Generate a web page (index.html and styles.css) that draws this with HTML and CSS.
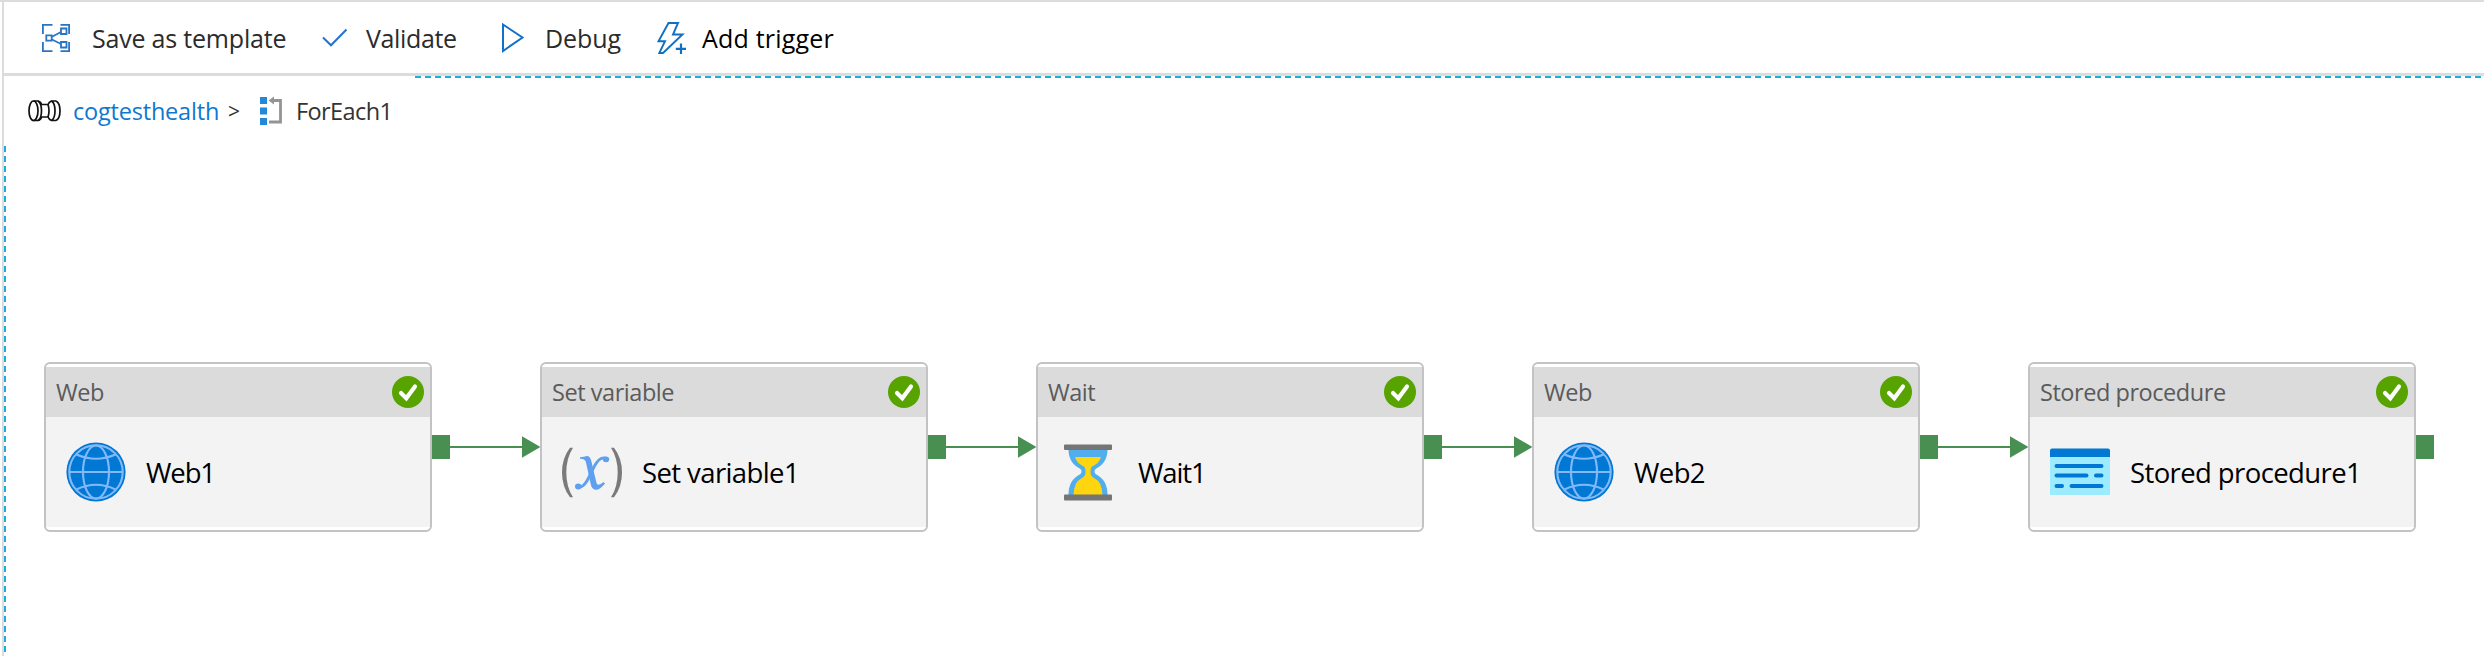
FILE: index.html
```html
<!DOCTYPE html>
<html lang="en">
<head>
<meta charset="utf-8">
<title>ForEach1</title>
<link rel="stylesheet" href="styles.css">
</head>
<body>
<svg class="defs" aria-hidden="true">
  <symbol id="ok" viewBox="0 0 32 32"><circle cx="16" cy="16" r="16" fill="#57a300"/><path d="M9 17 L14.3 22.2 L23 10.5" fill="none" stroke="#fff" stroke-width="4.2" stroke-linecap="round"/></symbol>
  <symbol id="globe" viewBox="0 0 60 60"><circle cx="30" cy="30" r="29.6" fill="#0078d4"/><g fill="none" stroke="#83b9f9" stroke-width="2.1"><circle cx="30" cy="30" r="26.7"/><ellipse cx="30" cy="30" rx="13" ry="26.5"/><path d="M3 30H57M10.500 12.500Q30 21 49.500 12.500M10.500 47.500Q30 38 49.500 47.500"/></g></symbol>
  <symbol id="arrow" viewBox="0 0 90 24"><path d="M0 12H73" stroke="#498f51" stroke-width="2"/><path d="M72 1.300 90.500 12 72 22.700Z" fill="#498f51"/></symbol>
</svg>
<div class="app">
  <header class="toolbar">
    <div class="tool save"><svg width="28" height="28" viewBox="0 0 28 28" fill="none" stroke="#2b74c4" stroke-width="1.800"><path d="M.9 10V.9H10.500M18.500.9H27.100V10M.9 18V27.100H10.500M18.500 27.100H27.100V18M10 12.800 19 8M10 15.500 19 20"/><path d="M4.300 11.300H9.700V16.700H4.300ZM19 4.500H24.500V10H19ZM19 18H24.500V23.500H19Z"/></svg><span class="t">Save as template</span></div>
    <div class="tool validate"><svg width="26" height="20" viewBox="0 0 26 20" fill="none" stroke="#2372d0" stroke-width="2"><path d="M1 9.500 9 17.300 24.500 1.500"/></svg><span class="t">Validate</span></div>
    <div class="tool debug"><svg width="24" height="32" viewBox="0 0 24 32" fill="none" stroke="#1170cc" stroke-width="2"><path d="M2 2.500V29L21.500 15.500Z"/></svg><span class="t">Debug</span></div>
    <div class="tool trigger"><svg width="30" height="34" viewBox="0 0 30 34" fill="none" stroke="#1170c0" stroke-width="1.900"><path d="M11.500 2H21L16 13.500H25.500L6 32H2.300L8 20.200H1.500Z"/><path d="M24 22.500V33M18.800 27.800H29" stroke-width="2.200"/></svg><span class="t">Add trigger</span></div>
  </header>
  <main class="canvas">
    <div class="edge-top"></div>
    <div class="edge-left"></div>
    <nav class="crumbs">
      <svg class="pipe" width="33" height="22" viewBox="0 0 33 22" fill="none" stroke="#111" stroke-width="1.700"><path d="M5.500 1H10Q13 2 13.500 4.500H20Q21 2 23.500 1H28M5.500 20.500H10Q13 19.500 13.500 17H20Q21 19.500 23.500 20.500H28"/><ellipse cx="5.500" cy="10.750" rx="4.500" ry="9.750"/><path d="M10 1Q13.500 3 13.500 10.750T10 20.500M23.500 1Q27 3 27 10.750T23.500 20.500M20 4.500Q22 10.700 20 17M28 1Q32 3 32 10.750T28 20.500"/></svg>
      <a class="t link-text">cogtesthealth</a><span class="sep">&gt;</span>
      <svg class="loop" width="23" height="30" viewBox="0 0 23 30"><path fill="#2388d8" d="M0 1H7V8H0ZM0 11.500H7V18.500H0ZM0 22H7V29H0Z"/><path d="M13 4.500H20.500V26H9" fill="none" stroke="#949494" stroke-width="2.800"/><path d="M8.500 4.500 14 .5V8.500Z" fill="#949494"/></svg>
      <span class="t current">ForEach1</span>
    </nav>
    <div class="flow">
      <section class="card"><div class="head"><span class="t">Web</span><svg class="ok"><use href="#ok"/></svg></div><div class="body"><svg class="icon"><use href="#globe"/></svg><span class="t short">Web1</span></div></section><i class="port"></i><svg class="link"><use href="#arrow"/></svg>
      <section class="card"><div class="head"><span class="t">Set variable</span><svg class="ok"><use href="#ok"/></svg></div><div class="body"><svg class="icon" viewBox="0 0 60 60"><g fill="#7a7a7a"><path d="M8 5.700H11Q4.300 16 4.300 30.500T11 55.300H8Q0 45 0 30.500T8 5.700Z"/><path d="M52 5.700H49Q55.700 16 55.700 30.500T49 55.300H52Q60 45 60 30.500T52 5.700Z"/></g><path fill="#5ea0ef" d="M18 15.200Q22 14.800 25 14Q28 14 29.300 19L34.500 41Q35.800 45 41.500 40L43 41.500Q38 48 33.500 47.800Q30 47.500 28.800 42.500L24 20.500Q23 16.500 18 16.800Z"/><path d="M43.500 16Q37.500 14.500 32.500 24L26.500 36Q21.500 46.500 15.500 45" fill="none" stroke="#5ea0ef" stroke-width="2.800"/><ellipse cx="44" cy="17.300" rx="3.200" ry="2.900" fill="#5ea0ef"/><ellipse cx="16.200" cy="44.500" rx="3.200" ry="2.900" fill="#5ea0ef"/></svg><span class="t">Set variable1</span></div></section><i class="port"></i><svg class="link"><use href="#arrow"/></svg>
      <section class="card"><div class="head"><span class="t">Wait</span><svg class="ok"><use href="#ok"/></svg></div><div class="body"><svg class="icon" viewBox="0 0 60 60"><path fill="#50adee" d="M10.500 6H49.500Q50 21 37.500 27Q35.500 29.500 37.500 32Q50 38 49.500 54H10.500Q10 38 22.500 32Q24.500 29.500 22.500 27Q10 21 10.500 6Z"/><path fill="#ffd50f" d="M17 15H43Q41 21.500 34 24.500Q32.500 26 32.500 30Q32.500 34 36 36Q44.500 40 44.500 53.500H15.500Q15.500 40 24 36Q27.500 34 27.500 30Q27.500 26 26 24.500Q19 21.500 17 15Z"/><rect x="6" y="2.500" width="48" height="5.500" rx="1" fill="#757575"/><rect x="6" y="52.500" width="48" height="6" rx="1" fill="#757575"/></svg><span class="t short">Wait1</span></div></section><i class="port"></i><svg class="link"><use href="#arrow"/></svg>
      <section class="card"><div class="head"><span class="t">Web</span><svg class="ok"><use href="#ok"/></svg></div><div class="body"><svg class="icon"><use href="#globe"/></svg><span class="t">Web2</span></div></section><i class="port"></i><svg class="link"><use href="#arrow"/></svg>
      <section class="card"><div class="head"><span class="t">Stored procedure</span><svg class="ok"><use href="#ok"/></svg></div><div class="body"><svg class="icon" viewBox="0 0 60 60"><path fill="#9cebff" d="M0 14H60V53H0Z"/><path fill="#0078d4" d="M0 15V8.500Q0 6.500 2 6.500H58Q60 6.500 60 8.500V15Z"/><path d="M6.500 24H51.500M6.500 33.500H36.500M46 33.500H51.500M6.500 44H12M21.500 44H51.500" stroke="#0078d4" stroke-width="4" stroke-linecap="round"/></svg><span class="t">Stored procedure1</span></div></section><i class="port"></i>
    </div>
  </main>
</div>
</body>
</html>
```
FILE: styles.css
```css
* { box-sizing: border-box; }
body { margin: 0; background: #fff; font-family: "Open Sans", "Noto Sans", sans-serif; }
.defs { position: absolute; width: 0; height: 0; }
.app { height: 656px; padding-left: 2px; border-top: 2px solid #dcdcdc; overflow: hidden; display: flex; flex-direction: column; }
.t { white-space: nowrap; }
.toolbar { height: 74px; border-left: 2px solid #dcdcdc; border-bottom: 3px solid #dcdcdc; display: flex; align-items: center; font-size: 25px; color: #2b2b2b; flex: none; }
.tool { display: flex; align-items: center; flex: none; height: 70px; }
.tool svg { flex: none; }
.save { margin-left: 38px; width: 280px; }
.save .t { margin-left: 22px; letter-spacing: -0.2px; }
.validate { width: 179px; }
.validate .t { margin-left: 18px; letter-spacing: -0.35px; }
.debug { width: 156px; }
.debug .t { margin-left: 20px; letter-spacing: -0.1px; }
.trigger { color: #000; }
.trigger .t { margin-left: 15px; letter-spacing: 0.2px; }
.canvas { flex: 1; position: relative; border-left: 2px solid #dcdcdc; }
.edge-top { position: absolute; left: 411px; right: 0; top: 0; height: 2px; background: repeating-linear-gradient(90deg, #1bb0dc 0 6px, transparent 6px 10px); }
.edge-left { position: absolute; left: 0; top: 70px; height: 508px; width: 2px; background: repeating-linear-gradient(180deg, #1bb0dc 0 6px, transparent 6px 10px); }
.crumbs { display: flex; align-items: center; height: 70px; padding-left: 24px; font-size: 23.5px; color: #333; }
.link-text { color: #0f78d0; margin-left: 12px; width: 155px; letter-spacing: -0.2px; }
.sep { font-size: 21px; width: 32px; }
.current { margin-left: 13px; letter-spacing: -0.6px; }
.flow { display: flex; margin: 216px 0 0 40px; }
.card { width: 388px; height: 170px; flex: none; border: 2px solid #c3c3c3; border-radius: 6px; padding: 3px 0; }
.head { height: 50px; background: #dbdbdb; display: flex; align-items: center; justify-content: space-between; padding: 0 6px 0 10px; font-size: 23.5px; letter-spacing: -0.45px; color: #5a5a5a; }
.ok { width: 32px; height: 32px; }
.body { height: 110px; background: #f3f3f3; display: flex; align-items: center; padding-left: 20px; font-size: 27.5px; letter-spacing: -0.6px; color: #000; }
.body .short { letter-spacing: -1.1px; }
.icon { width: 60px; height: 60px; margin-right: 20px; overflow: visible; }
.port { width: 18px; height: 24px; background: #498f51; margin-top: 73px; flex: none; }
.link { width: 90px; height: 24px; margin-top: 73px; flex: none; }
```
